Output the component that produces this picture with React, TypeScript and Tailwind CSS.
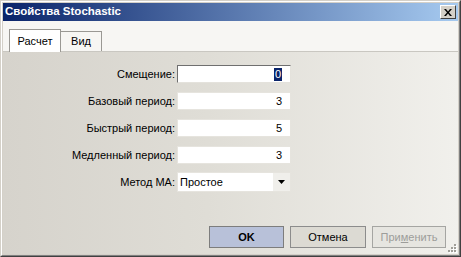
import React from "react";

const font = { fontFamily: '"Liberation Sans", Arial, sans-serif' };

function Field({ label, value, focused }: { label: string; value: string; focused?: boolean }) {
  return (
    <div className="flex items-center h-[18px]">
      <div className="w-[174px] pr-[2px] text-right text-[11px] text-black leading-none">{label}</div>
      <div
        className={
          "w-[114px] h-[18px] bg-white flex items-center justify-end pr-[8px] text-[11px] text-black border " +
          (focused ? "border-t-[#6f6f6f] border-l-[#6f6f6f] border-r-[#e4e2dc] border-b-[#e4e2dc]" : "border-[#e6e4de]")
        }
      >
        {focused ? (
          <span className="bg-[#0a246a] text-white px-[1px] leading-[13px]">{value}</span>
        ) : (
          <span>{value}</span>
        )}
      </div>
    </div>
  );
}

export default function App() {
  return (
    <div style={font} className="w-[461px] h-[257px] border border-t-[#d4d0c8] border-l-[#d4d0c8] border-r-[#404040] border-b-[#404040]">
      <div className="w-full h-full border border-t-white border-l-white border-r-[#808080] border-b-[#808080] p-[1px] flex flex-col bg-[#d4d0c8]">
        {/* Title bar */}
        <div className="h-[18px] flex items-center justify-between pl-[2px] pr-[2px] bg-[linear-gradient(to_right,#0a246a,#a6caf0)]">
          <span className="text-white font-bold text-[11.5px] leading-none">Свойства Stochastic</span>
          <div className="w-[16px] h-[14px] bg-[#d4d0c8] border border-t-white border-l-white border-r-[#404040] border-b-[#404040] flex items-center justify-center">
            <svg width="8" height="7" viewBox="0 0 8 7">
              <path d="M0 0h2l2 2.5L6 0h2L5 3.5 8 7H6L4 4.5 2 7H0l3-3.5z" fill="#000" />
            </svg>
          </div>
        </div>
        {/* Tab strip */}
        <div className="h-[31px] bg-[#f7f6f3] flex items-end pl-[6px] border-b border-[#c9c7c1]">
          <div className="h-[23px] w-[52px] bg-white border border-[#9a9893] border-b-0 flex items-center justify-center text-[11px] text-black -mb-[1px] relative">
            Расчет
          </div>
          <div className="h-[20px] w-[41px] bg-[#f7f6f3] border border-[#9a9893] border-l-0 border-b-0 flex items-center justify-center text-[11px] text-black">
            Вид
          </div>
        </div>
        {/* Body */}
        <div className="flex-1 flex flex-col bg-[linear-gradient(to_right,#d6d3cc,#dfddd6_45%,#f1f0ec)] relative">
          <div className="flex flex-col gap-[9px] pt-[13px]">
            <Field label="Смещение:" value="0" focused />
            <Field label="Базовый период:" value="3" />
            <Field label="Быстрый период:" value="5" />
            <Field label="Медленный период:" value="3" />
            <div className="flex items-center h-[18px]">
              <div className="w-[174px] pr-[2px] text-right text-[11px] text-black leading-none">Метод MA:</div>
              <div className="w-[114px] h-[20px] bg-white border border-[#e6e4de] flex items-center">
                <span className="flex-1 pl-[2px] text-[11px] text-black">Простое</span>
                <div className="w-[17px] h-[18px] bg-[#f0efeb] flex items-center justify-center">
                  <svg width="7" height="4" viewBox="0 0 7 4">
                    <path d="M0 0h7L3.5 4z" fill="#000" />
                  </svg>
                </div>
              </div>
            </div>
          </div>
          <div className="flex-1" />
          <div className="flex justify-end gap-[6px] pr-[12px] pb-[6px]">
            <div className="w-[75px] h-[22px] bg-[#b8c1d9] border border-[#7d7d7d] flex items-center justify-center text-[11px] font-bold text-black">
              OK
            </div>
            <div className="w-[76px] h-[22px] bg-[#dcdad3] border border-[#8c8c8c] flex items-center justify-center text-[11px] text-black">
              Отмена
            </div>
            <div className="w-[74px] h-[22px] bg-[#e6e5e0] border border-[#a5a5a2] flex items-center justify-center text-[11px] text-[#9d9d9a]">
              При<span className="underline">м</span>енить
            </div>
          </div>
          <svg className="absolute right-[1px] bottom-[1px]" width="11" height="11" viewBox="0 0 11 11">
            {[
              [8, 2], [5, 5], [8, 5], [2, 8], [5, 8], [8, 8],
            ].map(([x, y], i) => (
              <g key={i}>
                <rect x={x + 1} y={y + 1} width="2" height="2" fill="#ffffff" />
                <rect x={x} y={y} width="2" height="2" fill="#a09e98" />
              </g>
            ))}
          </svg>
        </div>
      </div>
    </div>
  );
}
